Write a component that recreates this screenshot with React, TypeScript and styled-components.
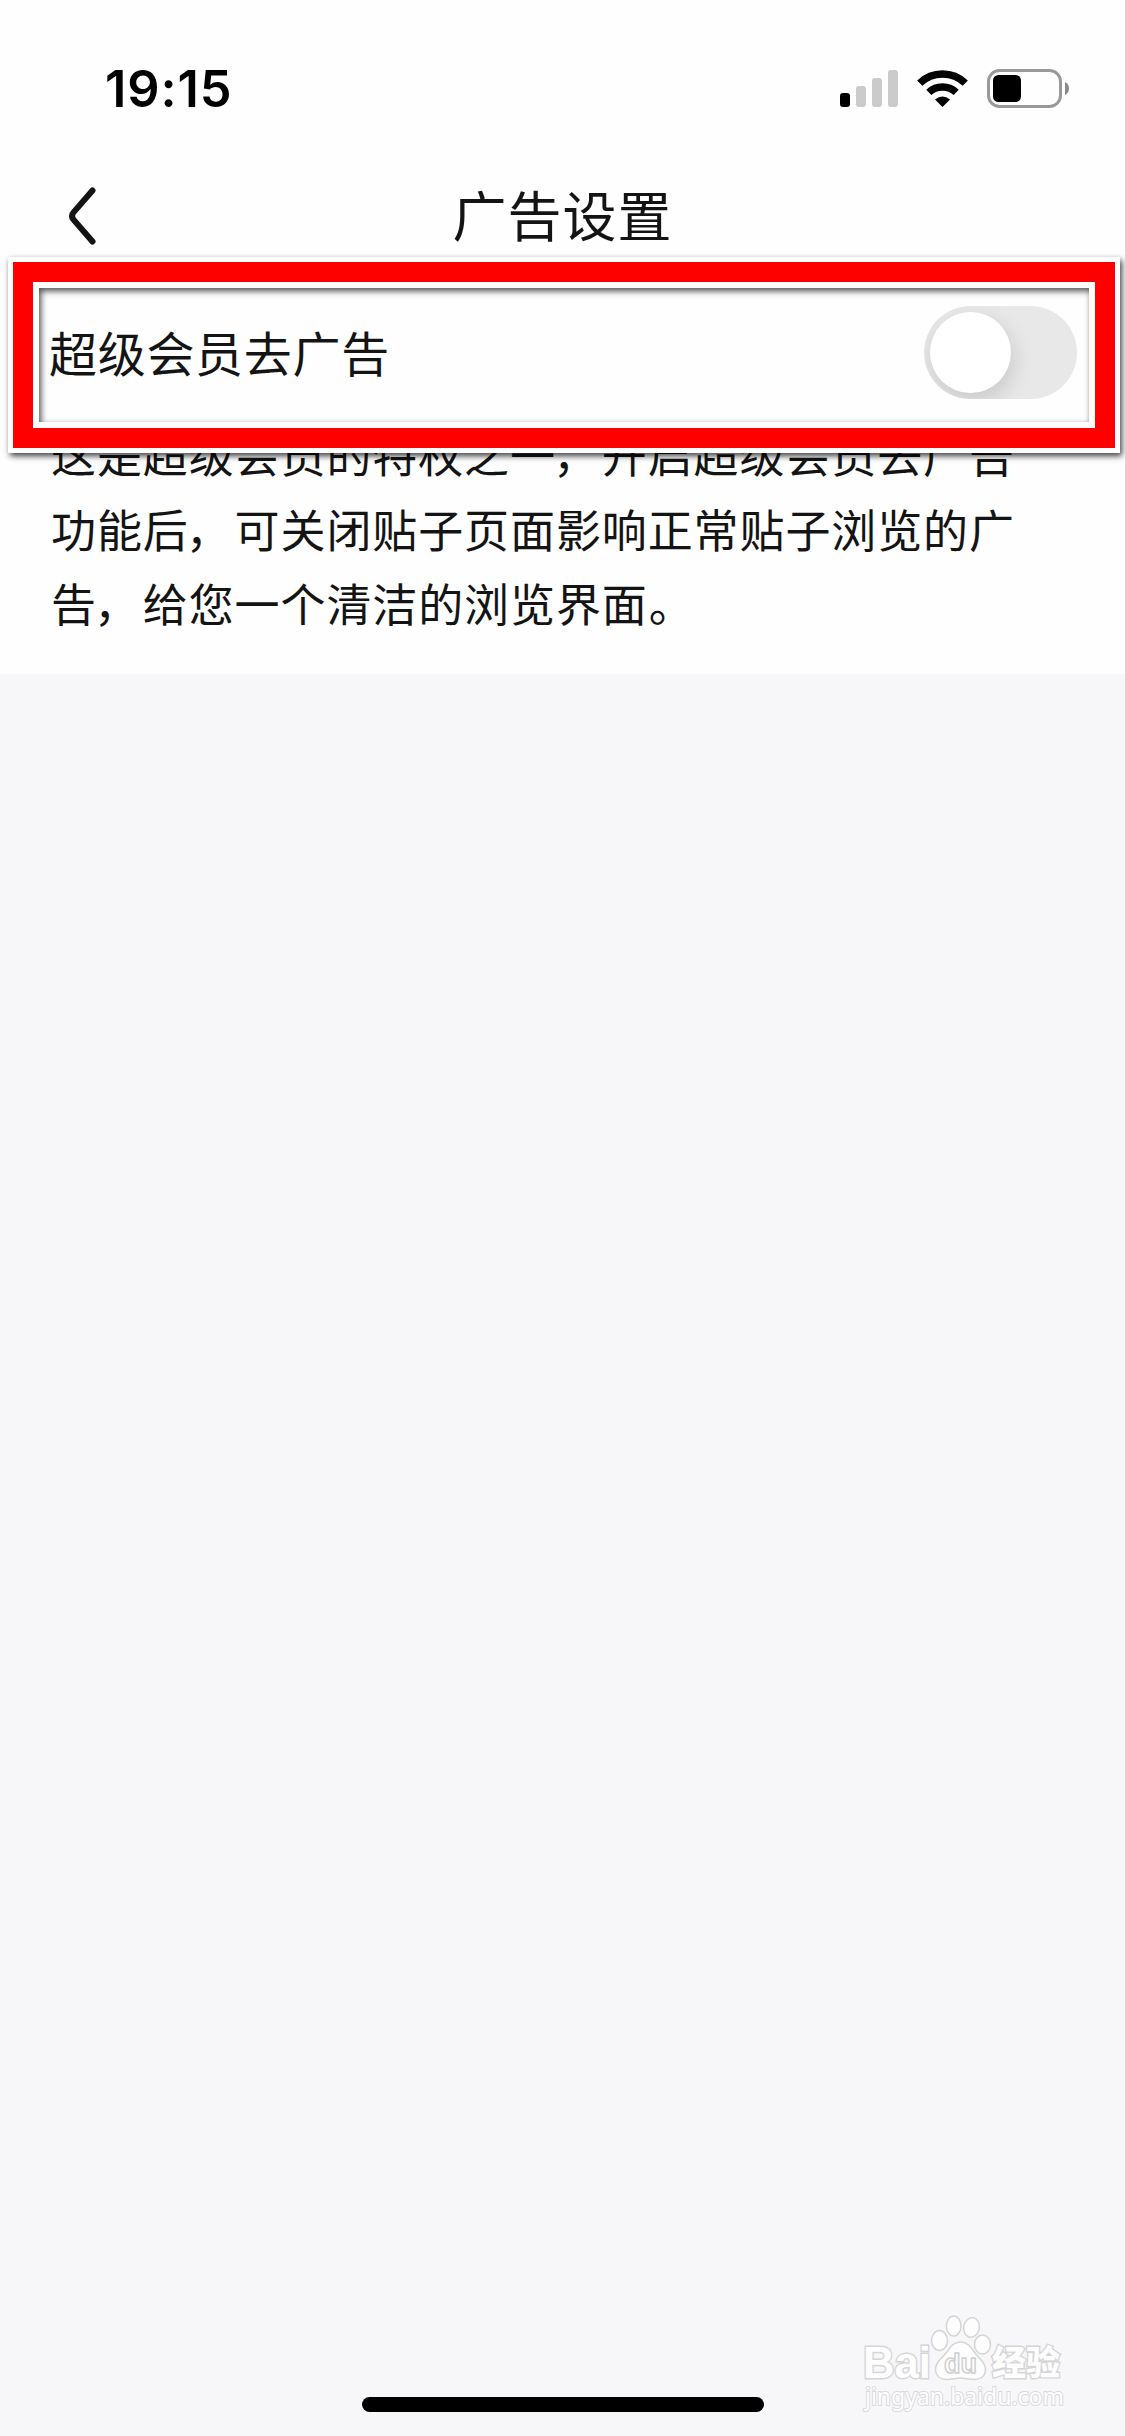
import React from "react";
import styled, { createGlobalStyle } from "styled-components";

const GlobalStyle = createGlobalStyle`
  * { box-sizing: border-box; }
  body {
    margin: 0;
    background: #f7f7f9;
    font-family: Inter, "Liberation Sans", "Noto Sans CJK SC", sans-serif;
  }
`;

const Screen = styled.div`
  width: 1125px;
  height: 2436px;
  display: flex;
  flex-direction: column;
  background: #f7f7f9;
  color: #141414;
  overflow: hidden;
`;

const Panel = styled.section`
  height: 674px;
  background: #fefefe;
  display: flex;
  flex-direction: column;
`;

const StatusBar = styled.header`
  height: 150px;
  padding: 56px 54px 0 105px;
  display: flex;
  justify-content: space-between;
  align-items: flex-start;
`;

const Clock = styled.time`
  font: 600 50.5px/66px Inter, "Liberation Sans", sans-serif;
  letter-spacing: 0.9px;
  color: #000;
`;

const StatusIcons = styled.svg`
  display: block;
  width: 231px;
  height: 44px;
  margin-top: 10px;
`;

const NavBar = styled.nav`
  height: 132px;
  padding: 0 66px;
  display: grid;
  grid-template-columns: 40px 1fr 40px;
  align-items: center;
`;

const BackIcon = styled.svg`
  width: 40px;
  height: 60px;
`;

const Title = styled.h1`
  margin: 0;
  padding-bottom: 5px;
  text-align: center;
  font: 400 54px/80px "Noto Sans CJK SC", sans-serif;
  letter-spacing: 1px;
`;

const SettingWrap = styled.div`
  position: relative;
  height: 135px;
`;

const SettingRow = styled.div`
  height: 142px;
  padding: 0 48px 0 49px;
  display: flex;
  justify-content: space-between;
  align-items: center;
`;

const Label = styled.span`
  padding-bottom: 4px;
  font: 400 48px/72px "Noto Sans CJK SC", sans-serif;
  letter-spacing: 0.7px;
`;

const Switch = styled.button`
  width: 153px;
  height: 93px;
  margin-bottom: 2px;
  padding: 6px;
  border: 0;
  border-radius: 47px;
  background: #e8e8e8;
  display: flex;
  overflow: hidden;
`;

const Knob = styled.span`
  width: 81px;
  height: 81px;
  border-radius: 50%;
  background: #fff;
  box-shadow: 2px 8px 22px rgba(0, 0, 0, 0.14);
`;

const Highlight = styled.div`
  position: absolute;
  left: 8px;
  top: -25px;
  width: 1112px;
  height: 196px;
  border: 5.5px solid #fff;
  box-shadow: 2px 3px 6px rgba(0, 0, 0, 0.75);
  background:
    linear-gradient(#f00, #f00) top / 100% 20px no-repeat,
    linear-gradient(#f00, #f00) bottom / 100% 20px no-repeat,
    linear-gradient(#f00, #f00) left / 20px 100% no-repeat,
    linear-gradient(#f00, #f00) right / 20px 100% no-repeat;
  padding: 20px;
`;

const HighlightInner = styled.div`
  height: 100%;
  border: 6px solid #fff;
  box-shadow: inset 2px 3px 6px rgba(0, 0, 0, 0.7);
`;

const Description = styled.p`
  margin: 0;
  padding: 0 51px;
  font: 400 45px/74.5px "Noto Sans CJK SC", sans-serif;
  letter-spacing: 0.9px;
  white-space: nowrap;
`;

const Punctuation = styled.span<{ $shift: number }>`
  margin: 0 ${(p) => -p.$shift}px 0 ${(p) => p.$shift}px;
`;

const Footer = styled.footer`
  margin-top: auto;
  height: 146px;
  display: flex;
  flex-direction: column;
  align-items: center;
`;

const Watermark = styled.svg`
  width: 214px;
  height: 130px;
  margin: 0 50px -23px auto;
  flex: none;
`;

const HomeIndicator = styled.div`
  width: 402px;
  height: 15px;
  border-radius: 8px;
  background: #000;
`;

const lines = [
  "这是超级会员的特权之一，开启超级会员去广告",
  "功能后，可关闭贴子页面影响正常贴子浏览的广",
  "告，给您一个清洁的浏览界面。",
];

const bars = [
  { x: 0, y: 27, fill: "#000" },
  { x: 16, y: 20, fill: "#cbcbcb" },
  { x: 32, y: 12, fill: "#cbcbcb" },
  { x: 48, y: 4, fill: "#cbcbcb" },
];

function Status() {
  return (
    <StatusIcons viewBox="0 0 231 44">
      {bars.map((b) => (
        <rect key={b.x} x={b.x} y={b.y} width="10" height={41 - b.y} rx="3" fill={b.fill} />
      ))}
      <g fill="none" stroke="#000" strokeWidth="7.4">
        <path d="M79.7 17.2a33 33 0 0 1 45.6 0" />
        <path d="M88.8 26.4a20 20 0 0 1 27.4 0" />
      </g>
      <path d="M95 33.4q7.5-6 15 0L102.500 41z" fill="#000" />
      <rect x="148.500" y="4.500" width="72" height="36" rx="11" fill="none" stroke="#999" strokeWidth="3" />
      <rect x="153" y="9" width="28" height="27" rx="5.500" fill="#000" />
      <path d="M225 16c2.800 1.200 4 3.800 4 6.500s-1.200 5.300-4 6.500z" fill="#8a8a8a" />
    </StatusIcons>
  );
}

function BaiduMark() {
  return (
    <Watermark viewBox="0 0 214 130">
      <g fill="#fdfdfd" stroke="#d5d5d6" strokeWidth="1.500">
        <ellipse cx="78.500" cy="50.500" rx="8" ry="10" />
        <ellipse cx="92.700" cy="36" rx="7.300" ry="10" />
        <ellipse cx="110.500" cy="37.500" rx="7.800" ry="9.800" transform="rotate(10 110.500 37.500)" />
        <ellipse cx="121.500" cy="54.500" rx="8" ry="9.500" />
        <path d="M99.500 52c9 0 11.500 8 17 14 5 5 8.500 9 8 14.500-.700 7-6 9-11.500 9-5 0-8.500-1.500-13.500-1.500s-8.500 1.500-13.500 1.500c-6 0-11-3-11.500-9.500-.300-6 3.500-9.500 8-14 5.500-5.500 8-14 17-14z" />
      </g>
      <g fill="#fdfdfd" stroke="#d5d5d6" strokeWidth="2.800" paintOrder="stroke" fontWeight="700">
        <text x="2" y="88" fontFamily="Liberation Sans, sans-serif" fontSize="44" textLength="68" lengthAdjust="spacingAndGlyphs">Bai</text>
        <text x="131" y="85" fontFamily="Noto Sans CJK SC, sans-serif" fontSize="34" fontWeight="900" textLength="68" lengthAdjust="spacingAndGlyphs">经验</text>
      </g>
      <text x="83" y="83" fontFamily="Liberation Sans, sans-serif" fontSize="28" fill="#fdfdfd" stroke="#cfcfd0" strokeWidth="1.500" fontWeight="700" textLength="33" lengthAdjust="spacingAndGlyphs">du</text>
      <text x="4" y="115" fontFamily="Noto Sans, sans-serif" fontSize="23" fill="#fdfdfd" stroke="#dadadb" strokeWidth="2" paintOrder="stroke" textLength="199" lengthAdjust="spacingAndGlyphs">jingyan.baidu.com</text>
    </Watermark>
  );
}

export default function App() {
  return (
    <Screen>
      <GlobalStyle />
      <Panel>
        <StatusBar>
          <Clock>19:15</Clock>
          <Status />
        </StatusBar>
        <NavBar>
          <BackIcon viewBox="0 0 40 60" fill="none" stroke="#141414" strokeWidth="6" strokeLinecap="round" strokeLinejoin="round">
            <path d="M26.500 4.500 7.500 26.400q-3 3.600 0 7.200L26.500 55.500" />
          </BackIcon>
          <Title>广告设置</Title>
        </NavBar>
        <SettingWrap>
          <SettingRow>
            <Label>超级会员去广告</Label>
            <Switch role="switch" aria-checked="false">
              <Knob />
            </Switch>
          </SettingRow>
          <Highlight>
            <HighlightInner />
          </Highlight>
        </SettingWrap>
        <Description>
          {lines.map((line) => (
            <React.Fragment key={line}>
              {line.split(/([，。])/).map((part, i) =>
                i % 2 ? (
                  <Punctuation key={i} $shift={part === "，" ? -3 : 1}>
                    {part}
                  </Punctuation>
                ) : (
                  part
                )
              )}
              <br />
            </React.Fragment>
          ))}
        </Description>
      </Panel>
      <Footer>
        <BaiduMark />
        <HomeIndicator />
      </Footer>
    </Screen>
  );
}
